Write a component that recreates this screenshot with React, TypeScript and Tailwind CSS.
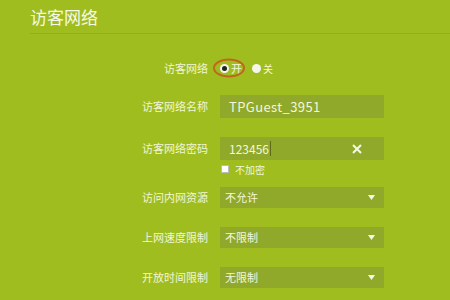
import { useState } from "react";

const font = { fontFamily: '"Noto Sans CJK SC", "Noto Sans", sans-serif' };

function Label({ text }: { text: string }) {
  return (
    <div className="w-[218px] pr-[10px] text-right text-[11px] leading-none text-[#f1f6d6]">
      {text}
    </div>
  );
}

function Caret() {
  return (
    <svg width="7" height="5" viewBox="0 0 7 5" className="absolute right-[9px] top-[8px]">
      <path d="M0 0 L7 0 L3.5 5 Z" fill="#f4f8e4" />
    </svg>
  );
}

function SelectRow({ label, value }: { label: string; value: string }) {
  return (
    <div className="flex items-center">
      <Label text={label} />
      <div className="relative ml-[2px] flex h-[21px] w-[164px] items-center bg-[#91a92b] pl-[5px] text-[11px] text-[#f3f7dd]">
        {value}
        <Caret />
      </div>
    </div>
  );
}

export default function App() {
  const [on, setOn] = useState(true);
  const [plain, setPlain] = useState(false);

  return (
    <div style={font} className="h-[300px] w-[450px] overflow-hidden bg-[#a0bd1f]">
      <div className="ml-[30px] h-[34px] border-b border-[#93ae1a] pt-[5px] text-[17px] leading-[24px] text-[#f6f9e6]">
        访客网络
      </div>

      <div className="mt-[24px] flex h-[20px] items-center">
        <Label text="访客网络" />
        <div className="relative ml-[2px] flex items-center text-[11px] text-[#f3f7dd]">
          <span className="absolute left-[-7px] top-1/2 h-[19px] w-[32px] -translate-y-1/2 rounded-[50%] border-2 border-[#c0661e]" />
          <button onClick={() => setOn(true)} className="flex items-center">
            <span className="flex h-[9px] w-[9px] items-center justify-center rounded-full bg-[#f4f6ee]">
              {on && <span className="h-[5px] w-[5px] rounded-full bg-[#222]" />}
            </span>
            <span className="ml-[2px]">开</span>
          </button>
          <button onClick={() => setOn(false)} className="ml-[10px] flex items-center">
            <span className="flex h-[9px] w-[9px] items-center justify-center rounded-full bg-[#f4f6ee]">
              {!on && <span className="h-[5px] w-[5px] rounded-full bg-[#222]" />}
            </span>
            <span className="ml-[2px] text-[10px]">关</span>
          </button>
        </div>
      </div>

      <div className="mt-[17px] flex items-center">
        <Label text="访客网络名称" />
        <div className="ml-[2px] flex h-[23px] w-[164px] items-center bg-[#91a92b] pl-[9px] text-[13px] tracking-[0.4px] text-[#f3f7dd]">
          TPGuest_3951
        </div>
      </div>

      <div className="mt-[19px] flex items-center">
        <Label text="访客网络密码" />
        <div className="relative ml-[2px] flex h-[23px] w-[164px] items-center bg-[#91a92b] pl-[9px] text-[12px] text-[#f3f7dd]">
          123456
          <span className="ml-[1px] h-[15px] w-px bg-[#5c6a20]" />
          <svg width="10" height="10" viewBox="0 0 10 10" className="absolute right-[22px] top-[7px]">
            <path d="M1 1 L9 9 M9 1 L1 9" stroke="#f4f8e4" strokeWidth="2" />
          </svg>
        </div>
      </div>

      <div className="ml-[221px] mt-[3px] flex h-[12px] items-center text-[10px] text-[#f1f6d6]">
        <button
          onClick={() => setPlain(!plain)}
          className="h-[8px] w-[8px] border border-[#bbb] bg-white"
        />
        <span className="ml-[6px]">不加密</span>
      </div>

      <div className="mt-[12px]">
        <SelectRow label="访问内网资源" value="不允许" />
      </div>
      <div className="mt-[19px]">
        <SelectRow label="上网速度限制" value="不限制" />
      </div>
      <div className="mt-[19px]">
        <SelectRow label="开放时间限制" value="无限制" />
      </div>
    </div>
  );
}
